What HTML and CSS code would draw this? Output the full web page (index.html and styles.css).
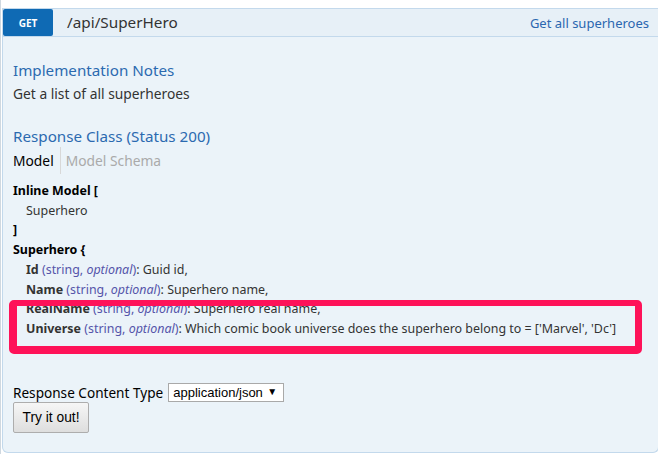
FILE: index.html
```html
<!DOCTYPE html>
<html>
<head>
<meta charset="utf-8">
<link rel="stylesheet" href="styles.css">
</head>
<body>
<div class="page">
  <div class="op">
    <div class="heading">
      <span class="method">GET</span>
      <span class="path">/api/SuperHero</span>
      <span class="summary">Get all superheroes</span>
    </div>
    <div class="content">
      <h4 class="title notes-title">Implementation Notes</h4>
      <p class="notes">Get a list of all superheroes</p>
      <h4 class="title rc-title">Response Class (Status 200)</h4>
      <div class="tabs">
        <span class="tab active">Model</span>
        <span class="tab">Model Schema</span>
      </div>
      <div class="model">
        <div class="line"><b>Inline Model [</b></div>
        <div class="line ind">Superhero</div>
        <div class="line"><b>]</b></div>
        <div class="line"><b>Superhero {</b></div>
        <div class="line ind"><b>Id</b> <span class="type">(string, <i>optional</i>)</span>: Guid id,</div>
        <div class="line ind"><b>Name</b> <span class="type">(string, <i>optional</i>)</span>: Superhero name,</div>
        <div class="line ind"><b>RealName</b> <span class="type">(string, <i>optional</i>)</span>: Superhero real name,</div>
        <div class="line ind"><b>Universe</b> <span class="type">(string, <i>optional</i>)</span>: Which comic book universe does the superhero belong to = ['Marvel', 'Dc']</div>
      </div>
      <div class="rct">
        <span class="rct-label">Response Content Type</span>
        <span class="select-wrap"><span class="select">application/json</span><span class="arrow">▼</span></span>
      </div>
      <button class="try">Try it out!</button>
    </div>
  </div>
  <div class="annot"></div>
</div>
</body>
</html>
```

FILE: styles.css
```css
html, body {
  margin: 0;
  padding: 0;
  background: #fff;
}
body {
  font-family: "Noto Sans", "Open Sans", sans-serif;
  color: #333;
}
.page {
  position: relative;
  width: 658px;
  height: 454px;
  overflow: hidden;
  padding-top: 8px;
  box-sizing: border-box;
  border-left: 1px solid #cfd8e0;
}
.op {
  margin-left: 1px;
  width: 657px;
}
.heading {
  display: flex;
  align-items: center;
  height: 27px;
  background: #e7f0f7;
  border: 1px solid #c3d9ec;
  border-right: none;
  width: 700px;
}
.method {
  width: 50px;
  height: 27px;
  line-height: 29px;
  background: #0f6ab4;
  color: #fff;
  font-size: 10px;
  font-weight: bold;
  text-align: center;
  border-radius: 2px;
}
.path {
  margin-left: 14px;
  font-size: 15.3px;
  color: #333;
  line-height: 27px;
}
.summary {
  margin-left: auto;
  margin-right: 54px;
  font-size: 13px;
  color: #2b67b0;
}
.content {
  background: #ebf3f9;
  border: 1px solid #c3d9ec;
  border-top: none;
  border-radius: 0 0 6px 6px;
  padding: 10px 10px 10px 10px;
  height: 395px;
  box-sizing: content-box;
}
.title {
  margin: 0;
  font-weight: normal;
  font-size: 15.2px;
  line-height: 20px;
  color: #2b6ab0;
}
.notes-title {
  margin-top: 13px;
}
.notes {
  margin: 4px 0 0;
  font-size: 13.8px;
  line-height: 20px;
  color: #333;
}
.rc-title {
  margin-top: 22px;
}
.tabs {
  display: flex;
  margin-top: 1px;
  height: 27px;
  align-items: center;
  font-size: 13.8px;
}
.tab {
  color: #aaa;
  line-height: 27px;
}
.tab.active {
  color: #000;
  padding-right: 6px;
  border-right: 1px solid #d8d8d8;
  margin-right: 5px;
}
.model {
  margin-top: 7px;
  font-size: 12.45px;
  line-height: 19.7px;
  color: #333;
}
.model b {
  color: #000;
}
.line.ind {
  padding-left: 13px;
}
.line.ind b {
  color: #333;
}
.type {
  color: #55a;
}
.rct {
  margin-top: 44px;
  display: flex;
  align-items: center;
  height: 19px;
  font-size: 13.6px;
  color: #000;
}
.select-wrap {
  position: relative;
  margin-left: 5px;
  display: inline-flex;
  align-items: center;
  width: 114px;
  height: 17px;
  border: 1px solid #a9a9a9;
  background: #fff;
  font-family: "Liberation Sans", Arial, sans-serif;
  font-size: 13px;
  color: #000;
  box-sizing: content-box;
}
.select {
  padding-left: 4px;
}
.arrow {
  position: absolute;
  right: 6px;
  top: 3px;
  font-size: 10px;
  line-height: 10px;
}
.try {
  display: block;
  width: 76px;
  height: 31px;
  margin: 0;
  padding: 0;
  border: 1px solid #adadad;
  border-radius: 2px;
  background: linear-gradient(#f6f6f6, #dedede);
  font-family: "Liberation Sans", Arial, sans-serif;
  font-size: 13.8px;
  color: #000;
}
.annot {
  position: absolute;
  left: 8px;
  top: 300px;
  width: 633px;
  height: 54px;
  box-sizing: border-box;
  border-style: solid;
  border-color: #fe1259;
  border-width: 6px 7px 8px 8px;
  border-radius: 5px;
}
```
